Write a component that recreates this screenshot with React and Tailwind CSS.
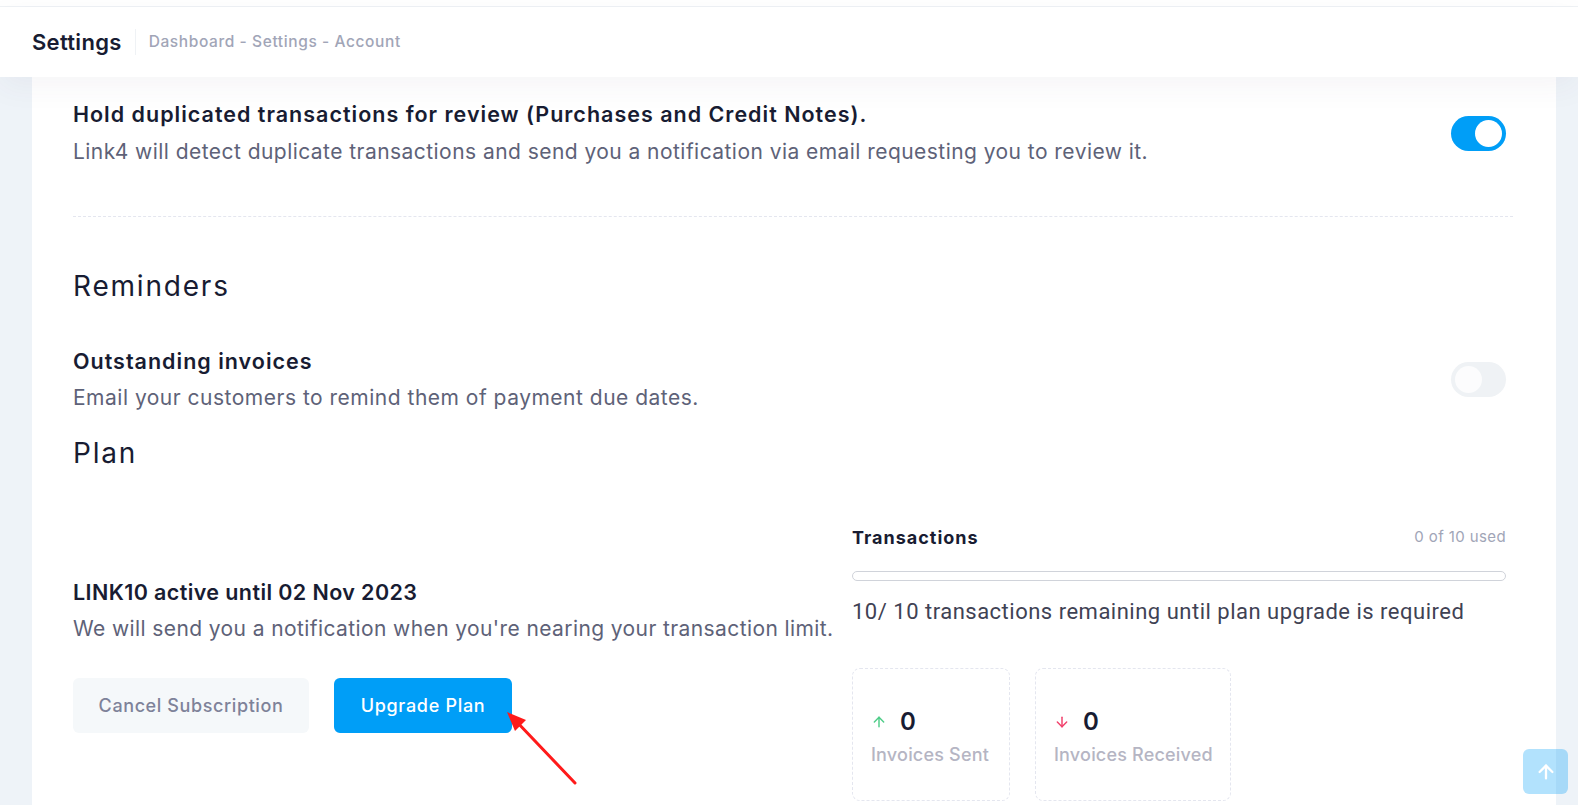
import { ArrowUp, ArrowDown } from "lucide-react";

function Toggle({ on }) {
  return (
    <div
      className={`w-[55px] h-[35px] rounded-full flex items-center px-[4px] ${
        on ? "bg-[#009ef7] justify-end" : "bg-[#eff2f5] justify-start"
      }`}
    >
      <div className={`w-[27px] h-[27px] rounded-full ${on ? "bg-white" : "bg-white/80"}`} />
    </div>
  );
}

function StatBox({ up, label, width }) {
  return (
    <div className={`${width} h-[133px] border border-dashed border-[#e4e6ef] rounded-lg pl-[18px] pt-[39px]`}>
      <div className="flex items-center gap-[13px]">
        {up ? (
          <ArrowUp className="w-[16px] h-[16px] text-[#50cd89]" strokeWidth={2.2} />
        ) : (
          <ArrowDown className="w-[16px] h-[16px] text-[#f1416c]" strokeWidth={2.2} />
        )}
        <span className="text-[24px] font-semibold text-[#181c32] leading-[28px]">0</span>
      </div>
      <div className="mt-[6px] text-[18px] font-medium text-[#b5b5c3] leading-[26px] tracking-[0.2px]">{label}</div>
    </div>
  );
}

export default function App() {
  return (
    <div className="h-[805px] overflow-hidden bg-[#eef3f8] relative" style={{ fontFamily: "Inter, 'Noto Sans', sans-serif" }}>
      <div className="h-[7px] bg-white border-b border-[#eff2f5]" />
      <header className="h-[70px] bg-white flex items-center px-8 relative z-10 shadow-[0_10px_30px_0_rgba(82,63,105,0.05)]">
        <h1 className="text-[22px] font-semibold text-[#181c32] pr-[13px] border-r border-[#eff2f5] leading-[26px] tracking-[0.3px]">
          Settings
        </h1>
        <div className="pl-[13px] text-[15.5px] text-[#a1a5b7] font-medium tracking-[0.6px]">Dashboard - Settings - Account</div>
      </header>

      <div className="flex h-[728px]">
        <div className="w-8" />
        <main className="flex-1 bg-white px-[41px] pt-[22px]">
          {/* duplicate hold */}
          <div className="flex items-center justify-between pr-[9px]">
            <div>
              <div className="text-[21.5px] font-semibold text-[#181c32] leading-[30px] tracking-[1px]">
                Hold duplicated transactions for review (Purchases and Credit Notes).
              </div>
              <div className="mt-[8px] text-[21px] text-[#5e6278] leading-[30px] tracking-[0.45px]">
                Link4 will detect duplicate transactions and send you a notification via email requesting you to review it.
              </div>
            </div>
            <Toggle on />
          </div>

          <div className="mt-[49px] border-t border-dashed border-[#e4e6ef] mr-[2px]" />

          <h2 className="mt-[51px] text-[28px] text-[#181c32] leading-[36px] tracking-[1.8px]">Reminders</h2>

          <div className="mt-[42px] flex items-center justify-between pr-[9px]">
            <div>
              <div className="text-[21.5px] font-semibold text-[#181c32] leading-[30px] tracking-[1px]">Outstanding invoices</div>
              <div className="mt-[7px] text-[21px] text-[#5e6278] leading-[30px] tracking-[0.5px]">
                Email your customers to remind them of payment due dates.
              </div>
            </div>
            <Toggle />
          </div>

          <h2 className="mt-[22px] text-[28px] text-[#181c32] leading-[36px] tracking-[1.8px]">Plan</h2>

          <div className="mt-[53px] flex">
            {/* left column */}
            <div className="w-[779px] pt-[53px]">
              <div className="text-[21.5px] font-semibold text-[#181c32] leading-[30px] tracking-[0.4px]">
                LINK10 active until 02 Nov 2023
              </div>
              <div className="mt-[7px] text-[21px] text-[#5e6278] leading-[30px] tracking-[0.4px]">
                We will send you a notification when you're nearing your transaction limit.
              </div>
              <div className="mt-[34px] flex gap-[25px]">
                <button className="w-[236px] h-[55px] rounded-md bg-[#f5f8fa] text-[#7e8299] text-[18px] font-medium tracking-[0.6px]">
                  Cancel Subscription
                </button>
                <button className="w-[178px] h-[55px] rounded-md bg-[#009ef7] text-white text-[18px] font-medium tracking-[0.7px]">
                  Upgrade Plan
                </button>
              </div>
            </div>

            {/* right column */}
            <div className="w-[654px]">
              <div className="flex items-center justify-between">
                <span className="text-[18px] font-bold text-[#181c32] tracking-[1px]">Transactions</span>
                <span className="text-[15px] text-[#a1a5b7] tracking-[0.4px]">0 of 10 used</span>
              </div>
              <div className="mt-[20px] h-[10px] rounded-full border border-[#d0d3da] bg-white" />
              <div
                className="mt-[16px] text-[22px] text-[#3f4254] leading-[30px] tracking-[0.5px]"
                style={{ fontFamily: "Roboto, 'Noto Sans', sans-serif" }}
              >
                10/ 10 transactions remaining until plan upgrade is required
              </div>
              <div className="mt-[41px] flex gap-[25px]">
                <StatBox up label="Invoices Sent" width="w-[158px]" />
                <StatBox label="Invoices Received" width="w-[196px]" />
              </div>
            </div>
          </div>
        </main>
        <div className="w-[22px]" />
      </div>

      {/* annotation arrow */}
      <svg className="absolute left-[498px] top-[703px] w-[90px] h-[90px] pointer-events-none" viewBox="0 0 90 90">
        <line x1="77" y1="80" x2="17" y2="17" stroke="#ff1a1a" strokeWidth="3" strokeLinecap="round" />
        <polygon points="9,9 28,17 17,28" fill="#ff1a1a" />
      </svg>

      {/* scroll top */}
      <div className="absolute left-[1523px] top-[749px] w-[45px] h-[45px] rounded-md bg-[#009ef7]/30 flex items-center justify-center">
        <ArrowUp className="w-[22px] h-[22px] text-white" strokeWidth={2.5} />
      </div>
    </div>
  );
}
